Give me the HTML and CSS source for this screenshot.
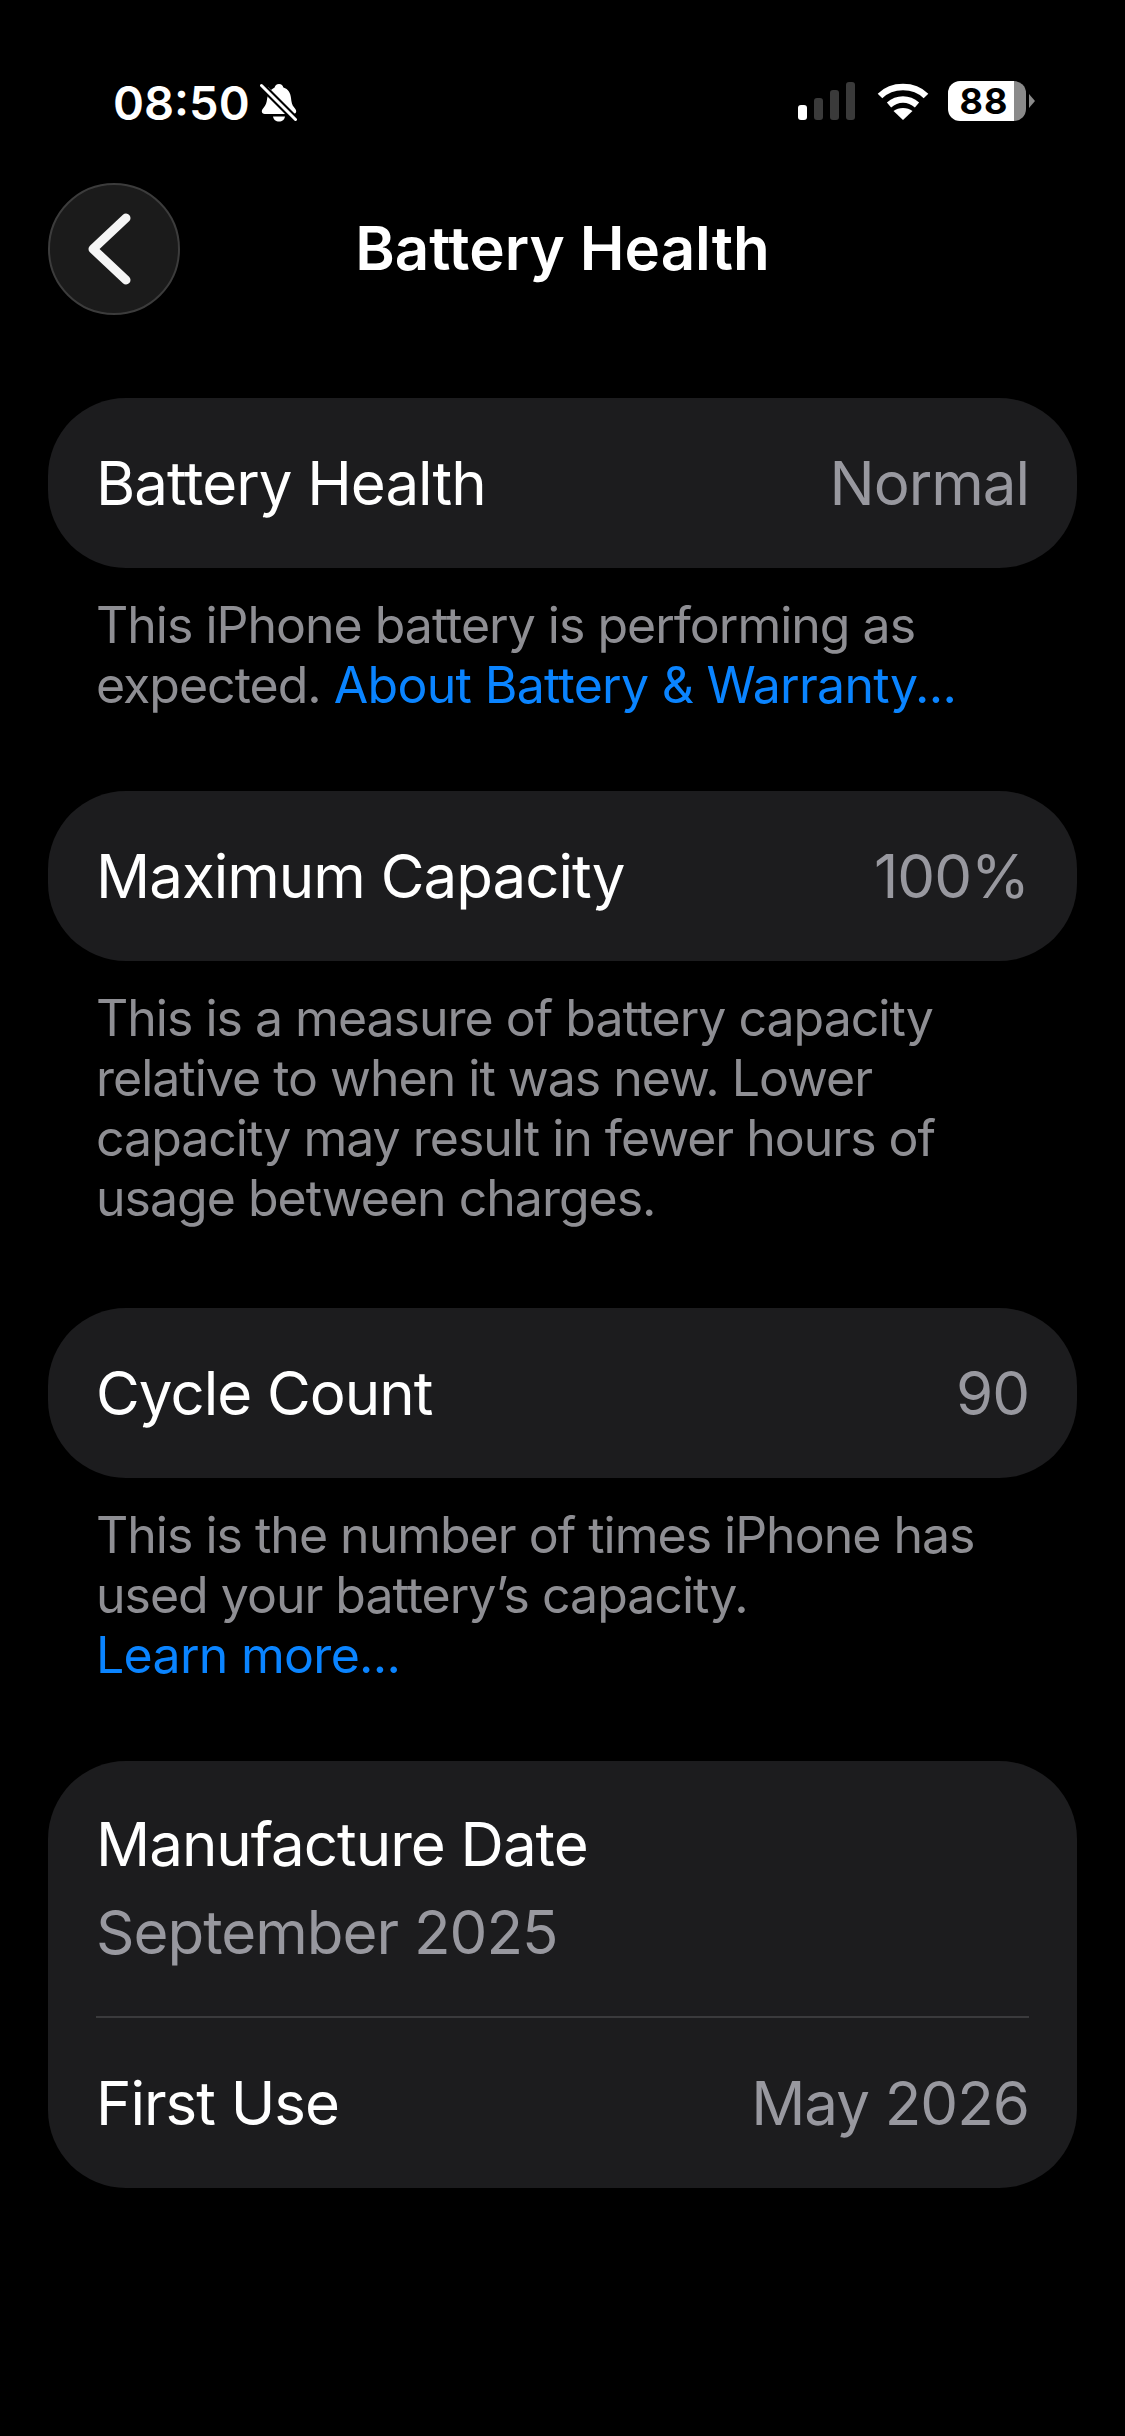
FILE: index.html
```html
<!DOCTYPE html>
<html lang="en">
<head>
<meta charset="UTF-8">
<meta name="viewport" content="width=device-width, initial-scale=1.0">
<title>Battery Health</title>
<link rel="stylesheet" href="styles.css">
</head>
<body>
  <div class="status-bar">
    <div class="status-left">
      <span class="time">08:50</span>
      <svg class="bell" width="38" height="40" viewBox="0 0 38 40">
        <path d="M19 1c2.500 0 4 1.600 4.400 3.600 5 1.500 7.100 5.600 7.600 10.400.4 4 1 7 3 9.200 1.500 1.700 2.200 3 2.200 4.300 0 1.600-1.300 2.500-3 2.500H4.800c-1.700 0-3-.9-3-2.500 0-1.300.7-2.600 2.200-4.300 1.800-2 2.600-4.600 3-7.600.3-2 .6-4 1.600-5.900L5 7l3-3 3 3c1-.9 2.300-1.700 3.600-2.400C15 2.600 16.500 1 19 1z" fill="#fff"/>
        <path d="M13 33.500h12c-.4 3-2.900 5-6 5s-5.600-2-6-5z" fill="#fff"/>
        <path d="M3 4l32 32" stroke="#000" stroke-width="7"/>
        <path d="M1.500 2.500l34 34" stroke="#fff" stroke-width="3" stroke-linecap="round"/>
      </svg>
    </div>
    <div class="status-right">
      <svg class="signal" width="60" height="38" viewBox="0 0 60 38">
        <rect x="0" y="23" width="9" height="15" rx="3" fill="#fff"/>
        <rect x="16" y="16" width="9" height="22" rx="3" fill="#3a3a3a"/>
        <rect x="32" y="8" width="9" height="30" rx="3" fill="#3a3a3a"/>
        <rect x="48" y="0" width="9" height="38" rx="3" fill="#3a3a3a"/>
      </svg>
      <svg class="wifi" width="52" height="38" viewBox="0 0 52 38">
        <path d="M3 14C9 8 17 5 26 5s17 3 23 9" fill="none" stroke="#fff" stroke-width="6.500"/>
        <path d="M12 23c4-3.500 9-5.500 14-5.500s10 2 14 5.500" fill="none" stroke="#fff" stroke-width="6.500"/>
        <path d="M16.500 29c2.500-2 6-3 9.500-3s7 1 9.500 3L26 38z" fill="#fff"/>
      </svg>
      <div class="battery">
        <div class="battery-body"><span class="battery-level">88</span></div>
        <div class="battery-cap"></div>
      </div>
    </div>
  </div>

  <div class="nav-bar">
    <div class="back-button">
      <svg width="46" height="72" viewBox="0 0 46 72">
        <path d="M41 5L8 36l33 31" fill="none" stroke="#f5f5f5" stroke-width="9" stroke-linecap="round" stroke-linejoin="round"/>
      </svg>
    </div>
    <div class="nav-title">Battery Health</div>
  </div>

  <div class="content">
    <div class="group">
      <div class="card">
        <div class="row"><span>Battery Health</span><span class="value">Normal</span></div>
      </div>
      <p class="note">This iPhone battery is performing as<br>expected. <a class="link">About Battery &amp; Warranty...</a></p>
    </div>

    <div class="group group-tall">
      <div class="card">
        <div class="row"><span>Maximum Capacity</span><span class="value">100%</span></div>
      </div>
      <p class="note">This is a measure of battery capacity<br>relative to when it was new. Lower<br>capacity may result in fewer hours of<br>usage between charges.</p>
    </div>

    <div class="group">
      <div class="card">
        <div class="row"><span>Cycle Count</span><span class="value">90</span></div>
      </div>
      <p class="note">This is the number of times iPhone has<br>used your battery’s capacity.<br><a class="link">Learn more...</a></p>
    </div>

    <div class="card">
      <div class="stack-row">
        <div>Manufacture Date</div>
        <div class="value">September 2025</div>
      </div>
      <div class="divider"></div>
      <div class="row"><span>First Use</span><span class="value">May 2026</span></div>
    </div>
  </div>
</body>
</html>
```

FILE: styles.css
```css
* {
  box-sizing: border-box;
}

body {
  margin: 0;
  width: 1125px;
  height: 2436px;
  background-color: #000;
  color: #fff;
  font-family: Inter, "Liberation Sans", sans-serif;
  overflow: hidden;
}

.status-bar {
  height: 183px;
  padding: 74px 90px 0 113px;
  display: flex;
  justify-content: space-between;
  align-items: flex-start;
}

.status-left {
  display: flex;
  align-items: center;
  gap: 10px;
}

.time {
  font-size: 47px;
  line-height: 58px;
  font-weight: 600;
}

.status-right {
  display: flex;
  align-items: center;
  gap: 19px;
  margin-top: 7px;
}

.battery {
  display: flex;
  align-items: center;
  gap: 3px;
}

.battery-body {
  width: 78px;
  height: 40px;
  border-radius: 12px;
  background: linear-gradient(to right, #fff 84%, #8a8a8a 84%);
  display: flex;
  align-items: center;
  justify-content: center;
}

.battery-level {
  color: #000;
  font-size: 36px;
  font-weight: 700;
  letter-spacing: 1px;
  padding-right: 6px;
}

.battery-cap {
  width: 6px;
  height: 14px;
  background-color: #8a8a8a;
  clip-path: polygon(0 0, 100% 50%, 0 100%);
}

.nav-bar {
  height: 215px;
  padding-left: 48px;
  display: flex;
  align-items: flex-start;
  position: relative;
}

.back-button {
  width: 132px;
  height: 132px;
  border-radius: 50%;
  background-color: #1b1b1b;
  border: 2px solid #3c3c3c;
  display: flex;
  align-items: center;
  justify-content: center;
  padding-right: 12px;
}

.nav-title {
  position: absolute;
  left: 0;
  right: 0;
  top: 30px;
  text-align: center;
  font-size: 60px;
  line-height: 70px;
  font-weight: 600;
}

.content {
  padding: 0 48px;
}

.group {
  margin-bottom: 76px;
}

.group-tall {
  margin-bottom: 80px;
}

.card {
  background-color: #1c1c1e;
  border-radius: 78px;
  font-size: 60px;
  letter-spacing: -1px;
  padding: 0 48px;
}

.row {
  height: 170px;
  display: flex;
  align-items: center;
  justify-content: space-between;
}

.value {
  color: #98989f;
}

.note {
  margin: 27px 0 0;
  padding: 0 48px;
  font-size: 50px;
  letter-spacing: -1px;
  line-height: 60px;
  color: #8e8e93;
}

.link {
  color: #0a84ff;
  letter-spacing: -0.7px;
}

.stack-row {
  height: 255px;
  padding-top: 39px;
  line-height: 88px;
}

.divider {
  height: 2px;
  background-color: #3a3a3c;
}
```
